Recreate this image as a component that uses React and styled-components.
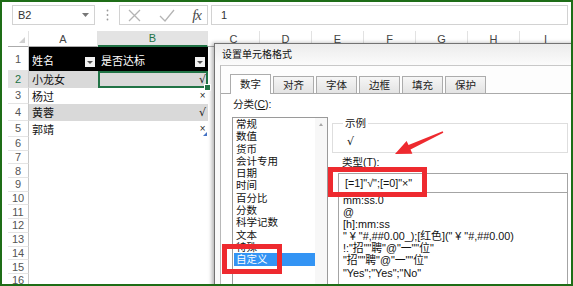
import React from "react";
import styled, { createGlobalStyle } from "styled-components";

const GlobalStyle = createGlobalStyle`
  html, body { margin: 0; padding: 0; background: #fff; }
  body { font-family: "Liberation Sans", "Noto Sans CJK SC", sans-serif; }
`;

const Frame = styled.div`
  position: relative;
  width: 573px;
  height: 286px;
  box-sizing: border-box;
  border: 2px solid #1e6d17;
  overflow: hidden;
  background: #fff;
`;

/* ---------- formula bar ---------- */
const FormulaBar = styled.div`
  display: flex;
  align-items: flex-start;
  height: 29px;
  padding: 3px 0 0 10px;
  box-sizing: border-box;
`;

const Box = styled.div`
  height: 20px;
  box-sizing: border-box;
  border: 1px solid #d2d2d2;
  background: #fff;
  display: flex;
  align-items: center;
  font-size: 11px;
  color: #333;
`;

const NameBox = styled(Box)`
  width: 83px;
  padding: 0 5px 0 5px;
  justify-content: space-between;
`;

const Dots = styled.div`
  width: 24px;
  height: 20px;
  display: flex;
  align-items: center;
  justify-content: center;
`;

const FxBox = styled(Box)`
  width: 89px;
  padding: 0 6px 0 8px;
  justify-content: space-between;
`;

const Fx = styled.span`
  font-family: "Liberation Serif", serif;
  font-style: italic;
  font-size: 15px;
  color: #4a4a4a;
  letter-spacing: -1px;
`;

const FormulaInput = styled(Box)`
  flex: 1;
  margin: 0 3px 0 3px;
  padding-left: 9px;
`;

/* ---------- sheet ---------- */
const Sheet = styled.div`
  margin-left: 6px;
  display: grid;
  grid-template-columns: 21px 69px 110px repeat(7, 52px);
  grid-template-rows: 16px 24px repeat(4, 16.5px) repeat(11, 13.7px);
  font-size: 11px;
`;

const ColHead = styled.div`
  box-sizing: border-box;
  border-right: 1px solid #e2e2e2;
  border-bottom: ${(p) => (p.$sel ? "2px solid #217346" : "1px solid #ababab")};
  background: ${(p) => (p.$sel ? "#e3e3e3" : "#fff")};
  color: ${(p) => (p.$sel ? "#217346" : "#444")};
  display: flex;
  align-items: center;
  justify-content: center;
  font-size: 11px;
`;

const Corner = styled(ColHead)`
  align-items: flex-end;
  justify-content: flex-end;
  padding: 0 3px 3px 0;
  &::after {
    content: "";
    width: 0;
    height: 0;
    border-left: 6px solid transparent;
    border-bottom: 6px solid #cfcfcf;
  }
`;

const RowHead = styled.div`
  box-sizing: border-box;
  border-bottom: 1px solid #e4e4e4;
  border-right: 1px solid #c8c8c8;
  background: ${(p) => (p.$sel ? "#e3e3e3" : "#fff")};
  color: ${(p) => (p.$sel ? "#217346" : "#555")};
  display: flex;
  align-items: center;
  justify-content: center;
  font-size: 11px;
`;

const Cell = styled.div`
  position: relative;
  box-sizing: border-box;
  background: ${(p) => (p.$band ? "#d9d9d9" : "#fff")};
  display: flex;
  align-items: center;
  justify-content: ${(p) => (p.$right ? "flex-end" : "flex-start")};
  padding: ${(p) => (p.$right ? "0 2px 0 0" : "0 0 0 3px")};
  color: #111;
  font-size: 11px;
  ${(p) =>
    p.$selected &&
    `
    box-shadow: inset 0 0 0 2px #217346;
    &::after {
      content: "";
      position: absolute;
      right: -3px;
      bottom: -3px;
      width: 5px;
      height: 5px;
      background: #217346;
      border: 1px solid #fff;
      z-index: 2;
    }
  `}
  ${(p) =>
    p.$resize &&
    `
    &::after {
      content: "";
      position: absolute;
      right: 1px;
      bottom: 1px;
      border-left: 4px solid transparent;
      border-bottom: 4px solid #4472c4;
    }
  `}
`;

const HeadCell = styled.div`
  background: #000;
  color: #fff;
  display: flex;
  align-items: flex-end;
  justify-content: space-between;
  padding: 0 3px 3px 3px;
  box-sizing: border-box;
  font-size: 11px;
  line-height: 14px;
`;

const FilterBtn = styled.div`
  width: 10px;
  height: 10px;
  margin-bottom: 1px;
  background: #f2f2f2;
  display: flex;
  align-items: center;
  justify-content: center;
  &::after {
    content: "";
    border-left: 3px solid transparent;
    border-right: 3px solid transparent;
    border-top: 3px solid #555;
  }
`;

const Mark = styled.span`
  font-family: "DejaVu Sans", sans-serif;
  font-size: ${(p) => (p.$small ? "8px" : "11px")};
  color: #222;
`;

/* ---------- dialog ---------- */
const Dialog = styled.div`
  position: absolute;
  left: 212px;
  top: 41px;
  width: 400px;
  height: 260px;
  background: #fafafa;
  border: 1px solid #737373;
  box-shadow: -2px 0 4px rgba(0, 0, 0, 0.3);
  color: #111;
`;

const DialogTitle = styled.div`
  height: 21px;
  line-height: 21px;
  padding-left: 7px;
  font-size: 10px;
  background: linear-gradient(#ececec, #fbfbfb);
`;

const Panel = styled.div`
  margin-left: 5px;
  padding-top: 8px;
  border-top: 1px solid #c8c8c8;
  border-left: 1px solid #b8b8b8;
  background: #fdfdfd;
  height: 240px;
`;

const TabStrip = styled.div`
  display: flex;
  align-items: flex-end;
  gap: 2px;
  height: 19px;
  padding-left: 9px;
  border-bottom: 1px solid #aaaaaa;
`;

const Tab = styled.div`
  width: 41px;
  height: ${(p) => (p.$active ? "20px" : "17px")};
  margin-bottom: ${(p) => (p.$active ? "-1px" : "0")};
  box-sizing: border-box;
  border: 1px solid #acacac;
  border-bottom: none;
  background: ${(p) => (p.$active ? "#fff" : "linear-gradient(#f6f6f6, #e3e3e3)")};
  font-size: 10.5px;
  line-height: ${(p) => (p.$active ? "18px" : "16px")};
  text-align: center;
  color: #222;
`;

const TabPage = styled.div`
  display: flex;
  background: #fff;
  padding: 3px 0 0 11px;
  height: 200px;
`;

const LeftCol = styled.div`
  width: 96px;
`;

const Label = styled.div`
  font-size: 10.5px;
  line-height: 14px;
  padding-left: ${(p) => p.$indent || 0}px;
  margin-top: ${(p) => p.$top || 0}px;
  u { text-underline-offset: 1px; }
`;

const CatList = styled.div`
  margin-top: 6px;
  height: 180px;
  border: 1px solid #9a9a9a;
  display: flex;
`;

const CatItems = styled.div`
  flex: 1;
  padding-left: 1px;
`;

const CatItem = styled.div`
  font-size: 10.5px;
  line-height: 12.3px;
  padding-left: 2px;
  background: ${(p) => (p.$active ? "#3394f4" : "transparent")};
  color: ${(p) => (p.$active ? "#fff" : "#111")};
`;

const ScrollTrack = styled.div`
  width: 12px;
  background: #f7f7f7;
  display: flex;
  justify-content: center;
  padding-top: 5px;
  box-sizing: border-box;
  &::before {
    content: "";
    height: 0;
    border-left: 2.5px solid transparent;
    border-right: 2.5px solid transparent;
    border-bottom: 3px solid #a8a8a8;
  }
`;

const RightCol = styled.div`
  width: 236px;
  margin-left: 4px;
`;

const SampleBox = styled.div`
  margin-top: 26px;
  height: 28px;
  border: 1px solid #dedede;
  padding-left: 14px;
`;

const Legend = styled.div`
  width: fit-content;
  margin: -8px 0 0 -4px;
  padding: 0 2px;
  background: #fff;
  font-size: 10.5px;
  line-height: 14px;
`;

const SampleValue = styled.div`
  margin-top: 6px;
  font-size: 11px;
  line-height: 12px;
  font-family: "DejaVu Sans", sans-serif;
`;

const TypeInput = styled.div`
  margin: 4px 0 0 6px;
  width: 230px;
  height: 20px;
  box-sizing: border-box;
  border: 1px solid #a4a4a4;
  padding-left: 6px;
  font-size: 10.8px;
  line-height: 18px;
`;

const FormatList = styled.div`
  margin-left: 6px;
  width: 230px;
  height: 120px;
  box-sizing: border-box;
  border: 1px solid #a4a4a4;
  border-top: none;
  padding: 1px 0 0 4px;
`;

const FormatItem = styled.div`
  font-size: 10.8px;
  line-height: 12.1px;
  white-space: nowrap;
`;

/* ---------- annotations ---------- */
const RedBox = styled.div`
  position: absolute;
  box-sizing: border-box;
  border: 5px solid #ee2a2f;
  left: ${(p) => p.$x}px;
  top: ${(p) => p.$y}px;
  width: ${(p) => p.$w}px;
  height: ${(p) => p.$h}px;
`;

const Arrow = styled.svg`
  position: absolute;
  left: 385px;
  top: 122px;
  pointer-events: none;
`;

const cols = ["A", "B", "C", "D", "E", "F", "G", "H", "I"];

const data = [
  { name: "小龙女", ok: true },
  { name: "杨过", ok: false },
  { name: "黄蓉", ok: true },
  { name: "郭靖", ok: false },
];

const categories = [
  "常规", "数值", "货币", "会计专用", "日期", "时间", "百分比",
  "分数", "科学记数", "文本", "特殊", "自定义",
];

const formats = [
  "mm:ss.0",
  "@",
  "[h]:mm:ss",
  '" ¥ "#,##0.00_);[红色](" ¥ "#,##0.00)',
  '!:"招""聘"@"一""位"',
  '"招""聘"@"一""位"',
  '"Yes";"Yes";"No"',
];

const tabs = ["数字", "对齐", "字体", "边框", "填充", "保护"];

function Blank({ n }) {
  return Array.from({ length: n }, (_, i) => <Cell key={i} />);
}

export default function App() {
  const rows = [];
  rows.push(
    <RowHead key="r1">1</RowHead>,
    <HeadCell key="h1">姓名<FilterBtn /></HeadCell>,
    <HeadCell key="h2">是否达标<FilterBtn /></HeadCell>,
    <Blank key="b1" n={7} />
  );
  data.forEach((d, i) => {
    const band = i % 2 === 0;
    rows.push(
      <RowHead key={"rh" + i} $sel={i === 0}>{i + 2}</RowHead>,
      <Cell key={"a" + i} $band={band}>{d.name}</Cell>,
      <Cell key={"b" + i} $band={band} $right $selected={i === 0} $resize={i === 3}>
        <Mark $small={!d.ok}>{d.ok ? "√" : "×"}</Mark>
      </Cell>,
      <Blank key={"bl" + i} n={7} />
    );
  });
  for (let r = 6; r <= 16; r++) {
    rows.push(<RowHead key={"rh" + r}>{r}</RowHead>, <Blank key={"bb" + r} n={9} />);
  }

  return (
    <>
      <GlobalStyle />
      <Frame>
        <FormulaBar>
          <NameBox>
            <span>B2</span>
            <svg width="7" height="4" viewBox="0 0 7 4">
              <polygon points="0,0 7,0 3.5,4" fill="#777" />
            </svg>
          </NameBox>
          <Dots>
            <svg width="3" height="12" viewBox="0 0 3 12">
              <circle cx="1.5" cy="1.5" r="0.9" fill="#999" />
              <circle cx="1.5" cy="6" r="0.9" fill="#999" />
              <circle cx="1.5" cy="10.5" r="0.9" fill="#999" />
            </svg>
          </Dots>
          <FxBox>
            <svg width="13" height="13" viewBox="0 0 13 13">
              <path d="M1 1 L12 12 M12 1 L1 12" stroke="#b4b4b4" strokeWidth="1.3" fill="none" />
            </svg>
            <svg width="16" height="13" viewBox="0 0 16 13">
              <path d="M1 7 L6 12 L15 1" stroke="#b4b4b4" strokeWidth="1.3" fill="none" />
            </svg>
            <Fx>fx</Fx>
          </FxBox>
          <FormulaInput>1</FormulaInput>
        </FormulaBar>

        <Sheet>
          <Corner />
          {cols.map((c) => (
            <ColHead key={c} $sel={c === "B"}>{c}</ColHead>
          ))}
          {rows}
        </Sheet>

        <Dialog>
          <DialogTitle>设置单元格格式</DialogTitle>
          <Panel>
            <TabStrip>
              {tabs.map((t, i) => (
                <Tab key={t} $active={i === 0}>{t}</Tab>
              ))}
            </TabStrip>
            <TabPage>
              <LeftCol>
                <Label $indent={1}>分类(<u>C</u>):</Label>
                <CatList>
                  <CatItems>
                    {categories.map((c, i) => (
                      <CatItem key={c} $active={i === categories.length - 1}>{c}</CatItem>
                    ))}
                  </CatItems>
                  <ScrollTrack />
                </CatList>
              </LeftCol>
              <RightCol>
                <SampleBox>
                  <Legend>示例</Legend>
                  <SampleValue>√</SampleValue>
                </SampleBox>
                <Label $indent={10} $top={2}>类型(<u>T</u>):</Label>
                <TypeInput>[=1]"√";[=0]"×"</TypeInput>
                <FormatList>
                  {formats.map((f) => (
                    <FormatItem key={f}>{f}</FormatItem>
                  ))}
                </FormatList>
              </RightCol>
            </TabPage>
          </Panel>
        </Dialog>

        <RedBox $x={326} $y={165} $w={99} $h={30} />
        <RedBox $x={220} $y={242} $w={60} $h={30} />
        <Arrow width="65" height="40" viewBox="385 122 65 40">
          <polygon
            points="393,152 404.6,138.9 406.5,143.0 440.7,129.2 441.3,130.8 408.5,147.6 410.4,151.7"
            fill="#ee2a2f"
          />
        </Arrow>
      </Frame>
    </>
  );
}
